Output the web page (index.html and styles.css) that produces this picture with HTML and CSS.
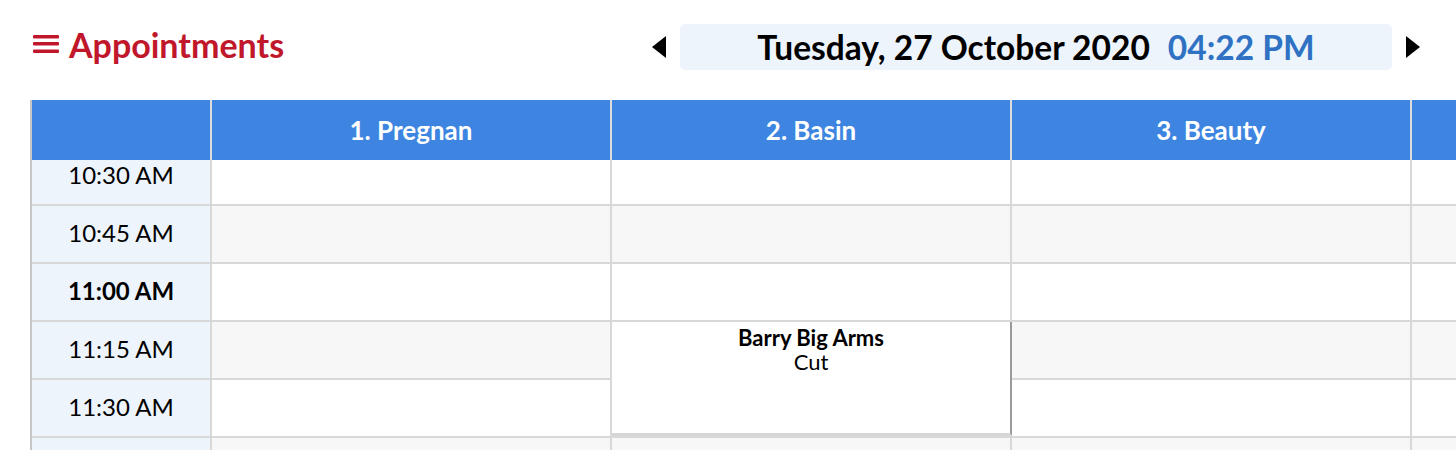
FILE: index.html
```html
<!DOCTYPE html>
<html lang="en">
<head>
    <meta charset="UTF-8">
    <meta name="viewport" content="width=device-width, initial-scale=1.0">
    <title>Appointments</title>
    <link rel="stylesheet" href="styles.css">
</head>
<body>
    <div class="page">
        <div class="topbar">
            <h1 class="title">
                <svg class="menu-icon" width="26" height="20" viewBox="0 0 26 20">
                    <rect x="0" y="1" width="26" height="3.5" rx="1"/>
                    <rect x="0" y="8" width="26" height="3.5" rx="1"/>
                    <rect x="0" y="15.5" width="26" height="3.5" rx="1"/>
                </svg>
                Appointments
            </h1>
            <div class="date-nav">
                <button class="arrow">
                    <svg width="14" height="22" viewBox="0 0 14 22"><polygon points="14,0 14,22 0,11"/></svg>
                </button>
                <div class="date-box">
                    <span class="date">Tuesday, 27 October 2020</span>
                    <span class="time">04:22 PM</span>
                </div>
                <button class="arrow">
                    <svg width="14" height="22" viewBox="0 0 14 22"><polygon points="0,0 0,22 14,11"/></svg>
                </button>
            </div>
        </div>

        <div class="schedule">
            <div class="head-row">
                <div class="head-cell time-col"></div>
                <div class="head-cell">1. Pregnan</div>
                <div class="head-cell">2. Basin</div>
                <div class="head-cell">3. Beauty</div>
                <div class="head-cell"></div>
            </div>
            <div class="body">
                <div class="rows">
                    <div class="row">
                        <div class="slot">10:30 AM</div>
                        <div class="cell"></div><div class="cell"></div><div class="cell"></div><div class="cell"></div>
                    </div>
                    <div class="row alt">
                        <div class="slot">10:45 AM</div>
                        <div class="cell"></div><div class="cell"></div><div class="cell"></div><div class="cell"></div>
                    </div>
                    <div class="row">
                        <div class="slot hour">11:00 AM</div>
                        <div class="cell"></div><div class="cell"></div><div class="cell"></div><div class="cell"></div>
                    </div>
                    <div class="row alt">
                        <div class="slot">11:15 AM</div>
                        <div class="cell"></div><div class="cell"></div><div class="cell"></div><div class="cell"></div>
                    </div>
                    <div class="row">
                        <div class="slot">11:30 AM</div>
                        <div class="cell"></div><div class="cell"></div><div class="cell"></div><div class="cell"></div>
                    </div>
                    <div class="row alt">
                        <div class="slot"></div>
                        <div class="cell"></div><div class="cell"></div><div class="cell"></div><div class="cell"></div>
                    </div>

                    <!-- booked slot spans two rows in column 2 -->
                    <div class="appt">
                        <div class="appt-name">Barry Big Arms</div>
                        <div class="appt-service">Cut</div>
                    </div>
                </div>
            </div>
        </div>
    </div>
</body>
</html>
```

FILE: styles.css
```css
body {
    margin: 0;
    font-family: Lato, "Open Sans", Arial, sans-serif;
    background-color: #ffffff;
    color: #000;
}
.page {
    width: 1456px;
    height: 450px;
    overflow: hidden;
}
.topbar {
    display: flex;
    align-items: center;
    height: 46px;
    padding-top: 24px;
    margin-bottom: 30px;
}
.title {
    display: flex;
    align-items: center;
    margin: 0 0 6px 33px;
    font-size: 34px;
    font-weight: bold;
    color: #c0172b;
}
.menu-icon {
    fill: #c0172b;
    margin-right: 10px;
}
.date-nav {
    display: flex;
    align-items: center;
    margin-left: auto;
    margin-right: 36px;
}
.arrow {
    border: none;
    background: none;
    padding: 0;
    display: flex;
    cursor: pointer;
}
.arrow svg {
    fill: #000;
}
.date-nav .arrow:first-child {
    margin-right: 14px;
}
.date-nav .arrow:last-child {
    margin-left: 14px;
}
.date-box {
    width: 712px;
    height: 46px;
    display: flex;
    align-items: center;
    justify-content: center;
    background-color: #edf4fb;
    border-radius: 5px;
    font-size: 33.5px;
    font-weight: bold;
}
.time {
    color: #2f72c4;
    margin-left: 18px;
}
.schedule {
    margin-left: 30px;
    border-left: 2px solid #c6c6c6;
    width: 1600px;
}
.head-row,
.row {
    display: grid;
    grid-template-columns: 178px 400px 400px 400px 400px;
}
.head-row {
    height: 60px;
    background-color: #3d85e0;
}
.head-cell {
    border-left: 2px solid #dcdcdc;
    display: flex;
    align-items: center;
    justify-content: center;
    color: #fff;
    font-size: 26px;
    font-weight: bold;
}
.head-cell.time-col {
    border-left: none;
}
.body {
    height: 290px;
    overflow: hidden;
}
.rows {
    position: relative;
    margin-top: -12px;
}
.row {
    height: 56px;
    border-bottom: 2px solid #d8d8d8;
}
.slot {
    display: flex;
    align-items: center;
    justify-content: center;
    background-color: #edf4fb;
    font-size: 24px;
    padding-bottom: 4px;
}
.slot.hour {
    font-weight: bold;
}
.cell {
    border-left: 2px solid #d8d8d8;
    background-color: #ffffff;
}
.row.alt .cell {
    background-color: #f7f7f7;
}
.appt {
    position: absolute;
    top: 174px;
    left: 580px;
    width: 398px;
    height: 107px;
    background-color: #ffffff;
    border-right: 2px solid #9a9a9a;
    border-bottom: 3px solid #d6d6d6;
    text-align: center;
    padding-top: 4px;
    font-size: 22px;
    line-height: 24px;
}
.appt-name {
    font-weight: bold;
}
```
